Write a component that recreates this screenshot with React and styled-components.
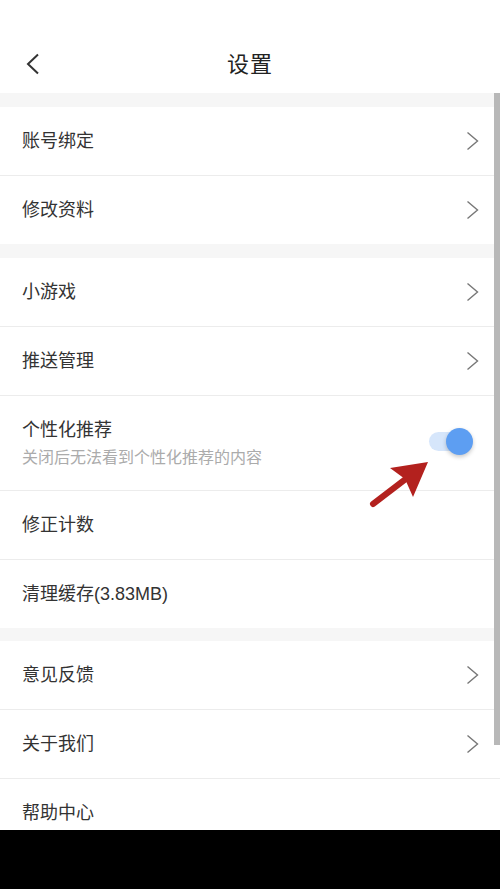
import React from "react";
import styled, { createGlobalStyle } from "styled-components";

const GlobalStyle = createGlobalStyle`
  html, body { margin: 0; padding: 0; background: #000; }
  body { font-family: "Liberation Sans", "Noto Sans CJK SC", sans-serif; }
  * { box-sizing: border-box; }
`;

const Screen = styled.div`
  position: relative;
  width: 500px;
  height: 830px;
  overflow: hidden;
  background: #f6f6f6;
  display: flex;
  flex-direction: column;
`;

const Header = styled.div`
  height: 93px;
  padding-top: 33px;
  background: #fff;
  flex-shrink: 0;
`;

const TitleBar = styled.div`
  position: relative;
  height: 60px;
  display: flex;
  align-items: center;
  justify-content: center;
`;

const BackBtn = styled.div`
  position: absolute;
  left: 26px;
  top: 20px;
  width: 14px;
  height: 22px;
  display: flex;
`;

const Title = styled.h1`
  margin: 0 0 2px;
  font-family: "Noto Sans CJK SC", sans-serif;
  font-size: 22px;
  font-weight: 400;
  color: #222;
  letter-spacing: 1px;
`;

const Group = styled.div`
  background: #fff;
  margin-top: ${(p) => (p.$gap ? p.$gap : 14)}px;
  flex-shrink: 0;
`;

const Row = styled.div`
  height: ${(p) => (p.$tall ? 95 : 69)}px;
  border-top: 1px solid #ececec;
  &:first-child { border-top: none; height: ${(p) => (p.$tall ? 94 : 68)}px; }
  padding: 0 21px 0 22px;
  display: flex;
  align-items: center;
  justify-content: space-between;
`;

const TextBox = styled.div`
  display: flex;
  flex-direction: column;
  gap: 6px;
`;

const Label = styled.span`
  font-size: 18px;
  color: #333;
  line-height: 24px;
`;

const Sub = styled.span`
  font-size: 16px;
  color: #ababab;
  line-height: 20px;
`;

const Switch = styled.div`
  position: relative;
  width: 44px;
  height: 27px;
  margin-right: 6px;
  margin-top: -4px;
`;

const Track = styled.div`
  position: absolute;
  left: 0;
  top: 4px;
  width: 36px;
  height: 19px;
  border-radius: 10px;
  background: #d6e6fb;
`;

const Knob = styled.div`
  position: absolute;
  right: 0;
  top: 0;
  width: 27px;
  height: 27px;
  border-radius: 50%;
  background: #5d9ef2;
  box-shadow: 0 2px 4px rgba(0, 0, 0, 0.22);
`;

const Scrollbar = styled.div`
  position: absolute;
  right: 0;
  top: 93px;
  width: 6px;
  height: 652px;
  background: #b8b8b8;
`;

const Pointer = styled.svg`
  position: absolute;
  left: 365px;
  top: 455px;
`;

const Chevron = () => (
  <svg width="13" height="20" viewBox="0 0 13 20">
    <polyline points="1.5,1.5 11.5,10 1.5,18.5" fill="none" stroke="#777" strokeWidth="1.4" strokeLinejoin="miter" />
  </svg>
);

const BackIcon = () => (
  <svg width="14" height="22" viewBox="0 0 14 22">
    <polyline points="12,1.5 2,11 12,20.5" fill="none" stroke="#333" strokeWidth="2" />
  </svg>
);

const Item = ({ label, arrow = true }) => (
  <Row>
    <Label>{label}</Label>
    {arrow && <Chevron />}
  </Row>
);

export default function App() {
  return (
    <>
      <GlobalStyle />
      <Screen>
        <Header>
          <TitleBar>
            <BackBtn><BackIcon /></BackBtn>
            <Title>设置</Title>
          </TitleBar>
        </Header>

        <Group>
          <Item label="账号绑定" />
          <Item label="修改资料" />
        </Group>

        <Group>
          <Item label="小游戏" />
          <Item label="推送管理" />
          <Row $tall>
            <TextBox>
              <Label>个性化推荐</Label>
              <Sub>关闭后无法看到个性化推荐的内容</Sub>
            </TextBox>
            <Switch>
              <Track />
              <Knob />
            </Switch>
          </Row>
          <Item label="修正计数" arrow={false} />
          <Item label="清理缓存(3.83MB)" arrow={false} />
        </Group>

        <Group $gap={13}>
          <Item label="意见反馈" />
          <Item label="关于我们" />
          <Item label="帮助中心" arrow={false} />
        </Group>

        <Scrollbar />
        <Pointer width="70" height="55" viewBox="0 0 70 55">
          <line x1="8" y1="49" x2="42" y2="23" stroke="#b3211e" strokeWidth="6" strokeLinecap="round" />
          <polygon points="63,7 25,13 40,24 48,42" fill="#b3211e" />
        </Pointer>
      </Screen>
    </>
  );
}
